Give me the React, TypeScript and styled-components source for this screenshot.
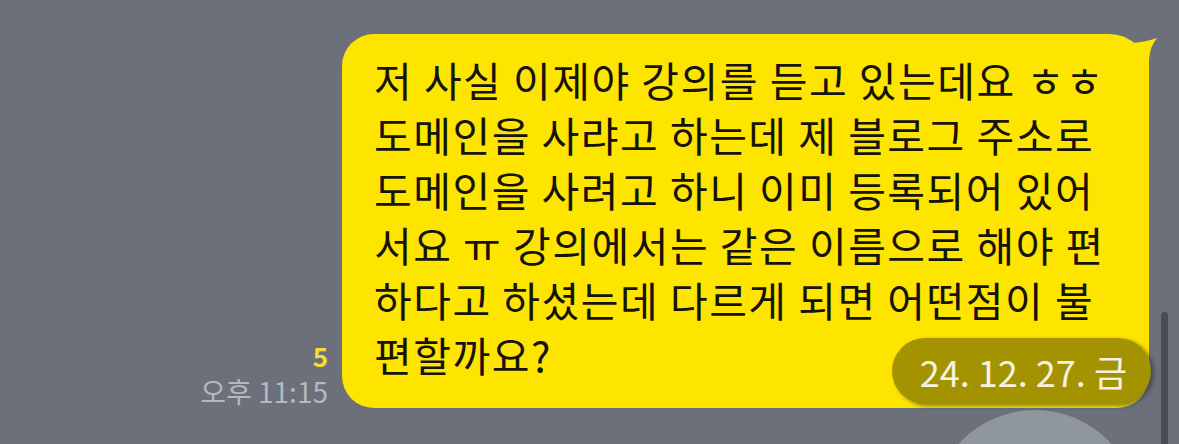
import React from "react";
import styled, { createGlobalStyle } from "styled-components";

const Global = createGlobalStyle`
  html, body { margin: 0; padding: 0; }
  body {
    background: #6b707a;
    width: 1179px;
    height: 444px;
    overflow: hidden;
    font-family: "Noto Sans CJK KR", "Noto Sans", sans-serif;
  }
`;

const Screen = styled.div`
  position: relative;
  width: 1179px;
  height: 444px;
  overflow: hidden;
  background: #6b707a;
`;

const Row = styled.div`
  display: flex;
  justify-content: flex-end;
  align-items: flex-end;
  gap: 14px;
  padding: 34px 30px 0 0;
`;

const Meta = styled.div`
  display: flex;
  flex-direction: column;
  align-items: flex-end;
  gap: 4px;
`;

const Unread = styled.span`
  color: #f5dc36;
  font-size: 26px;
  font-weight: 700;
  line-height: 28px;
`;

const Time = styled.span`
  color: #b4b8bf;
  font-size: 28px;
  line-height: 34px;
  white-space: nowrap;
`;

const Bubble = styled.div`
  position: relative;
  width: 807px;
  box-sizing: border-box;
  background: #fee500;
  border-radius: 32px 40px 32px 32px;
  padding: 18px 20px 26px 32px;
  color: #15130a;
  font-size: 41px;
  line-height: 55px;
  letter-spacing: 1.5px;
`;

const Line = styled.div`
  white-space: nowrap;
`;

const Tail = styled.svg`
  position: absolute;
  top: 0;
  left: 780px;
  width: 40px;
  height: 40px;
  overflow: visible;
`;

const DatePill = styled.div`
  position: absolute;
  right: -2px;
  bottom: 4px;
  height: 66px;
  padding: 0 24px 0 28px;
  display: flex;
  align-items: center;
  border-radius: 33px;
  background: #a39300;
  color: #f6f2e2;
  font-size: 36px;
  letter-spacing: 0;
  white-space: nowrap;
  box-shadow: 3px 2px 4px rgba(40, 44, 52, 0.55);
`;

const ScrollBar = styled.div`
  position: absolute;
  left: 1161px;
  top: 312px;
  width: 7px;
  height: 160px;
  border-radius: 4px;
  background: #474c55;
`;

const FloatButton = styled.div`
  position: absolute;
  left: 932px;
  top: 410px;
  width: 206px;
  height: 206px;
  border-radius: 50%;
  background: #90969d;
`;

const lines = [
  "저 사실 이제야 강의를 듣고 있는데요 ㅎㅎ",
  "도메인을 사랴고 하는데 제 블로그 주소로",
  "도메인을 사려고 하니 이미 등록되어 있어",
  "서요 ㅠ 강의에서는 같은 이름으로 해야 편",
  "하다고 하셨는데 다르게 되면 어떤점이 불",
  "편할까요?",
];

export default function App() {
  return (
    <Screen>
      <Global />
      <Row>
        <Meta>
          <Unread>5</Unread>
          <Time>오후 11:15</Time>
        </Meta>
        <Bubble>
          <Tail viewBox="0 0 40 40">
            <path d="M0 2 Q6 5 11 9 Q24 8 35 4 Q28 12 27 26 L27 40 L0 40 Z" fill="#fee500" />
          </Tail>
          {lines.map((l, i) => (
            <Line key={i}>{l}</Line>
          ))}
          <DatePill>24. 12. 27. 금</DatePill>
        </Bubble>
      </Row>
      <FloatButton />
      <ScrollBar />
    </Screen>
  );
}
